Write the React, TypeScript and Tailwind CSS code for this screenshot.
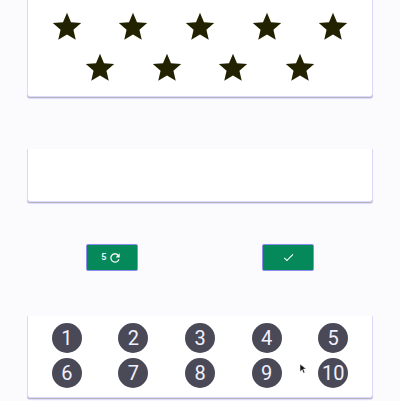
const STAR_PATH = 'M12 17.27L18.18 21l-1.64-7.03L22 9.24l-7.19-.61L12 2 9.19 8.63 2 9.24l5.46 4.73L5.82 21z';

function Star() {
  return (
    <svg viewBox="0 0 24 24" className="w-[34px] h-[34px]" fill="#222200">
      <path d={STAR_PATH} />
    </svg>
  );
}

function Card({ className, children }: { className: string; children?: React.ReactNode }) {
  return (
    <div
      className={`mx-auto w-[346px] bg-white border-x border-b border-[#dcd9fa] rounded-b-[3px] shadow-[0_1px_0_#b4b4bc,0_2px_1px_#dcd9fb] ${className}`}
    >
      {children}
    </div>
  );
}

export default function App() {
  const numbers = [1, 2, 3, 4, 5, 6, 7, 8, 9, 10];

  return (
    <div className="relative w-[400px] h-[401px] overflow-hidden bg-[#fbfbfe] font-['Roboto',sans-serif]">
      <Card className="h-[97px] pt-[6px]">
        <div className="flex flex-wrap justify-center">
          {Array.from({ length: 9 }).map((_, i) => (
            <div key={i} className="w-[66.6px] h-[41px] flex items-center justify-center">
              <Star />
            </div>
          ))}
        </div>
      </Card>

      <Card className="mt-[52px] h-[53px]" />

      <div className="mt-[42px] mx-auto w-[353px] grid grid-cols-2 justify-items-center">
        <button className="w-[52px] h-[27px] bg-[#05895a] border border-[#8e8bea] rounded-[2px] flex items-center justify-center gap-[2px] text-white">
          <span className="text-[9px] font-bold leading-none text-[#e6f4ff]">5</span>
          <svg viewBox="0 0 24 24" className="w-[14px] h-[14px]" fill="currentColor">
            <path d="M17.65 6.35C16.2 4.9 14.21 4 12 4c-4.42 0-7.99 3.58-7.99 8s3.57 8 7.99 8c3.73 0 6.84-2.55 7.73-6h-2.08c-.82 2.33-3.04 4-5.65 4-3.31 0-6-2.69-6-6s2.69-6 6-6c1.66 0 3.14.69 4.22 1.78L13 11h7V4l-2.35 2.35z" />
          </svg>
        </button>
        <button className="w-[52px] h-[27px] bg-[#05895a] border border-[#8e8bea] rounded-[2px] flex items-center justify-center text-white">
          <svg viewBox="0 0 24 24" className="w-[13px] h-[13px]" fill="currentColor">
            <path d="M9 16.17L4.83 12l-1.42 1.41L9 19 21 7l-1.41-1.41z" />
          </svg>
        </button>
      </div>

      <Card className="mt-[45px] h-[82px] pt-[4px]">
        <div className="flex flex-wrap justify-center">
          {numbers.map((n) => (
            <div key={n} className="w-[66.6px] h-[35px] flex items-center justify-center">
              <div className="w-[30px] h-[30px] rounded-full bg-[#4a4957] flex items-center justify-center text-[20px] leading-none text-[#f2f1ff]">
                {n}
              </div>
            </div>
          ))}
        </div>
      </Card>

      {/* mouse pointer caught in the capture */}
      <svg viewBox="0 0 10 14" className="absolute left-[300px] top-[364px] w-[7px] h-[10px]">
        <path d="M0 0 L0 11 L3 8 L5 13 L7 12 L5 7 L9 7 Z" fill="#111" stroke="#fff" strokeWidth="0.8" />
      </svg>
    </div>
  );
}
